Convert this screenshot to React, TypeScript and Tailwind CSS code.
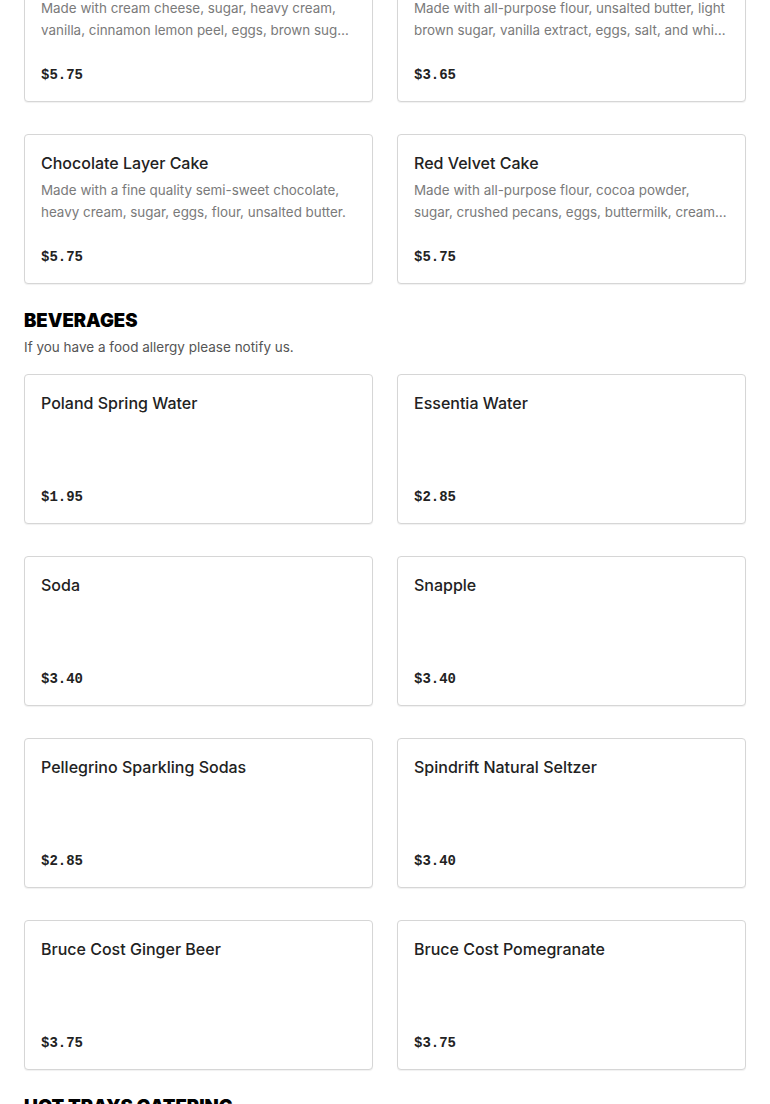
import React from "react";

type Item = { name: string; desc?: string; price: string };

const desserts: Item[] = [
  {
    name: "New York Cheesecake",
    desc: "Made with cream cheese, sugar, heavy cream, vanilla, cinnamon lemon peel, eggs, brown sugar, graham crackers, butter.",
    price: "$5.75",
  },
  {
    name: "Blondie",
    desc: "Made with all-purpose flour, unsalted butter, light brown sugar, vanilla extract, eggs, salt, and white chocolate chips.",
    price: "$3.65",
  },
  {
    name: "Chocolate Layer Cake",
    desc: "Made with a fine quality semi-sweet chocolate, heavy cream, sugar, eggs, flour, unsalted butter.",
    price: "$5.75",
  },
  {
    name: "Red Velvet Cake",
    desc: "Made with all-purpose flour, cocoa powder, sugar, crushed pecans, eggs, buttermilk, cream cheese frosting.",
    price: "$5.75",
  },
];

const beverages: Item[] = [
  { name: "Poland Spring Water", price: "$1.95" },
  { name: "Essentia Water", price: "$2.85" },
  { name: "Soda", price: "$3.40" },
  { name: "Snapple", price: "$3.40" },
  { name: "Pellegrino Sparkling Sodas", price: "$2.85" },
  { name: "Spindrift Natural Seltzer", price: "$3.40" },
  { name: "Bruce Cost Ginger Beer", price: "$3.75" },
  { name: "Bruce Cost Pomegranate", price: "$3.75" },
];

function ItemCard({ name, desc, price }: Item) {
  return (
    <div className="flex h-[150px] flex-col rounded-[4px] border border-[#d6d6d6] bg-white p-4 shadow-[0_1px_1px_rgba(0,0,0,0.06)]">
      <h3 className="text-[16px] font-medium leading-6 text-[#222]">{name}</h3>
      {desc && (
        <p className="mt-1 line-clamp-2 text-[13.4px] leading-[22px] text-[#7a7a7a]">{desc}</p>
      )}
      <div className="mt-auto font-['Liberation_Mono',monospace] text-[14px] font-bold leading-5 text-[#222]">
        {price}
      </div>
    </div>
  );
}

function Section({ title, note, items }: { title?: string; note?: string; items: Item[] }) {
  return (
    <section className="mb-6">
      {title && (
        <div className="mb-4">
          <h2 className="text-[18.5px] font-black uppercase leading-6 text-black">{title}</h2>
          {note && <p className="mt-1 text-[13.5px] leading-[22px] text-[#555]">{note}</p>}
        </div>
      )}
      <div className="grid grid-cols-2 gap-x-6 gap-y-8">
        {items.map((it) => (
          <ItemCard key={it.name} {...it} />
        ))}
      </div>
    </section>
  );
}

export default function App() {
  return (
    <div className="h-[1104px] overflow-hidden bg-white font-['Inter',sans-serif]">
      <div className="-mt-[48px] px-6">
        <Section items={desserts} />
        <Section title="Beverages" note="If you have a food allergy please notify us." items={beverages} />
        <section>
          <h2 className="text-[18.5px] font-black uppercase leading-6 text-black">Hot Trays Catering</h2>
        </section>
      </div>
    </div>
  );
}
